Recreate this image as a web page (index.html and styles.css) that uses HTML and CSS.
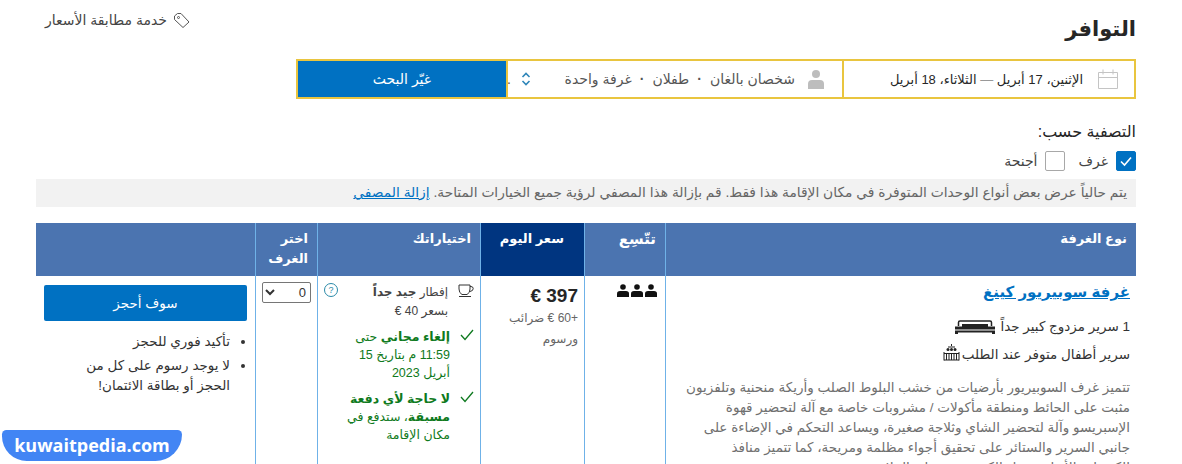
FILE: index.html
```html
<!DOCTYPE html>
<html lang="ar" dir="rtl">
<head>
<meta charset="utf-8">
<title>التوافر</title>
<link rel="stylesheet" href="styles.css">
</head>
<body>
<main class="page">
  <header class="top">
    <h2 class="title">التوافر</h2>
    <a class="match">
      <svg class="tag" viewBox="0 0 17 17" width="17" height="17"><path d="M1.500 4 4.500 1.500h3.500l8 8.500-6 5.500-8.500-8z" fill="none" stroke="#555"/><circle cx="5.500" cy="5.500" r="1" fill="none" stroke="#555"/></svg>
      <span>خدمة مطابقة الأسعار</span>
    </a>
  </header>

  <section class="search">
    <div class="seg seg-date">
      <svg class="cal" viewBox="0 0 22 22" width="22" height="22"><path d="M1.500 4.500h19v16h-19zM1.500 9.500h19M6 1.500v5M16 1.500v5" fill="none" stroke="#c4c4c4"/></svg>
      <span>الإثنين، 17 أبريل <i class="dash">—</i> الثلاثاء، 18 أبريل</span>
    </div>
    <div class="seg seg-guests">
      <svg class="person" viewBox="0 0 18 20" width="18" height="20"><circle cx="9" cy="5" r="4" fill="#bdbdbd"/><path d="M1 20v-5q0-4 4-4h8q4 0 4 4v5z" fill="#bdbdbd"/></svg>
      <span class="guests">شخصان بالغان</span><i class="dot">·</i><span class="guests">طفلان</span><i class="dot">·</i><span class="guests">غرفة واحدة</span>
      <svg class="updown" viewBox="0 0 10 14" width="10" height="14"><path d="M1.500 5 5 1.500 8.500 5M1.500 9 5 12.500 8.500 9" fill="none" stroke="#2f86b9" stroke-width="1.600"/></svg>
      <span class="stop">.</span>
    </div>
    <button class="change">غيّر البحث</button>
  </section>

  <section class="filter">
    <div class="filter-title">التصفية حسب:</div>
    <div class="checks">
      <label class="check"><span class="box on"><svg viewBox="0 0 20 20" width="20" height="20"><path d="m5 10.500 3.500 3.500L15 6.500" fill="none" stroke="#fff" stroke-width="1.600"/></svg></span>غرف</label>
      <label class="check"><span class="box"></span>أجنحة</label>
    </div>
    <p class="notice">يتم حالياً عرض بعض أنواع الوحدات المتوفرة في مكان الإقامة هذا فقط. قم بإزالة هذا المصفي لرؤية جميع الخيارات المتاحة. <a href="#">إزالة المصفي</a></p>
  </section>

  <section class="rooms">
    <div class="head c-type">نوع الغرفة</div>
    <div class="head c-sleeps">تتّسِع</div>
    <div class="head c-price today">سعر اليوم</div>
    <div class="head c-choice">اختياراتك</div>
    <div class="head c-select">اختر الغرف</div>
    <div class="head c-book"></div>

    <div class="cell c-type">
      <a class="room-name" href="#">غرفة سوبيريور كينغ</a>
      <div class="bed">1 سرير مزدوج كبير جداً
        <svg viewBox="0 0 42 14" width="42" height="14"><path d="M4.500 6V2.500q0-1.500 1.500-1.500h30q1.500 0 1.500 1.500V6" fill="none" stroke="#222" stroke-width="1.500"/><path d="M8 4h26v3H8z" fill="#222"/><path d="M1 6.500h40v3H1zM1 10.500h40V14h-3v-1.500H4V14H1z" fill="#222"/></svg>
      </div>
      <div class="bed crib">سرير أطفال متوفر عند الطلب
        <svg viewBox="0 0 17 17" width="17" height="17"><path d="M1 9.500h15M1 16h15M1 8v8.500M16 8v8.500M3.500 9.500V16M6 9.500V16M8.500 9.500V16M11 9.500V16M13.500 9.500V16" fill="none" stroke="#222"/><path d="M8.500 0v2M5 3h7" stroke="#222"/><circle cx="5" cy="5.500" r="1.500" fill="#222"/><circle cx="8.500" cy="5.500" r="1.500" fill="#222"/><circle cx="12" cy="5.500" r="1.500" fill="#222"/></svg>
      </div>
      <p class="desc">تتميز غرف السوبيريور بأرضيات من خشب البلوط الصلب وأريكة منحنية وتلفزيون مثبت على الحائط ومنطقة مأكولات / مشروبات خاصة مع آلة لتحضير قهوة الإسبريسو وآلة لتحضير الشاي وثلاجة صغيرة، ويساعد التحكم في الإضاءة على جانبي السرير والستائر على تحقيق أجواء مظلمة ومريحة، كما تتميز منافذ<br>الكهرباء والأبواب بقفل إلكتروني وخزانة الملابس بتصميم عصري</p>
    </div>
    <div class="cell c-sleeps">
      <div class="people">
        <svg viewBox="0 0 12 13" width="12" height="13"><circle cx="6" cy="3" r="2.800"/><path d="M0 13V9.500Q0 7 3 7h6q3 0 3 2.500V13z"/></svg>
        <svg viewBox="0 0 12 13" width="12" height="13"><circle cx="6" cy="3" r="2.800"/><path d="M0 13V9.500Q0 7 3 7h6q3 0 3 2.500V13z"/></svg>
        <svg viewBox="0 0 12 13" width="12" height="13"><circle cx="6" cy="3" r="2.800"/><path d="M0 13V9.500Q0 7 3 7h6q3 0 3 2.500V13z"/></svg>
      </div>
    </div>
    <div class="cell c-price">
      <div class="amount">€ 397</div>
      <div class="tax">+60 € ضرائب<br>ورسوم</div>
    </div>
    <div class="cell c-choice">
      <div class="opt meal">
        <svg class="cup" viewBox="0 0 16 13" width="16" height="13"><path d="M1 1h11v4q0 4-3 5.500H4Q1 9 1 5zM12 2.500h1q2.200 0 2.200 2.200T12 7.500M1 12.500h12" fill="none" stroke="#333"/></svg>
        <div class="opt-text"><div>إفطار <b>جيد جداً</b></div><div>بسعر 40 €</div></div>
        <span class="help">?</span>
      </div>
      <div class="opt good">
        <svg class="tick" viewBox="0 0 14 12" width="14" height="12"><path d="m1 6 4 4.500L13 1" fill="none" stroke="#0f7a20" stroke-width="1.300"/></svg>
        <div class="opt-text"><b>إلغاء مجاني</b> حتى<br>11:59 م بتاريخ 15<br>أبريل 2023</div>
      </div>
      <div class="opt good">
        <svg class="tick" viewBox="0 0 14 12" width="14" height="12"><path d="m1 6 4 4.500L13 1" fill="none" stroke="#0f7a20" stroke-width="1.300"/></svg>
        <div class="opt-text"><b>لا حاجة لأي دفعة<br>مسبقة</b>، ستدفع في<br>مكان الإقامة</div>
      </div>
    </div>
    <div class="cell c-select">
      <select class="qty"><option>0</option></select>
    </div>
    <div class="cell c-book">
      <button class="reserve">سوف أحجز</button>
      <ul class="perks">
        <li>تأكيد فوري للحجز</li>
        <li>لا يوجد رسوم على كل من الحجز أو بطاقة الائتمان!</li>
      </ul>
    </div>
  </section>
</main>
<div class="brand" dir="ltr">kuwaitpedia.com</div>
</body>
</html>
```

FILE: styles.css
```css
html, body {
  margin: 0;
  height: 464px;
  overflow: hidden;
  background: #fff;
}
body {
  font-family: "Liberation Sans", "DejaVu Sans", sans-serif;
  color: #262626;
  font-size: 14px;
  position: relative;
}
.page {
  width: 1100px;
  margin-inline-start: 46px;
  margin-inline-end: 36px;
}
.top {
  display: flex;
  justify-content: space-between;
  align-items: flex-start;
  height: 59px;
}
.title {
  margin: 12px 0 0;
  font-size: 21px;
  line-height: 34px;
  font-weight: 700;
  color: #262626;
}
.match {
  display: flex;
  align-items: center;
  gap: 6px;
  margin: 11px 0 0 9px;
  font-size: 14px;
  line-height: 18px;
  color: #444;
}
.search {
  display: flex;
  width: 840px;
  height: 40px;
}
.seg {
  display: flex;
  align-items: center;
  box-sizing: border-box;
  border: 2px solid #e9c53f;
  background: #fff;
}
.seg-date {
  width: 294px;
  gap: 14px;
  padding-inline-start: 15px;
  font-size: 13px;
  color: #262626;
}
.dash { font-style: normal; color: #999; }
.seg-guests {
  width: 336px;
  border-inline-start: 0;
  padding-inline-start: 17px;
  font-size: 14px;
  color: #555;
}
.person { margin-inline-end: 12px; }
.dot { font-style: normal; margin: 0 8px; font-weight: 700; }
.updown { margin-inline-start: auto; margin-inline-end: 10px; }
.stop { margin-inline-end: -1px; }
.change {
  width: 210px;
  border: 2px solid #e9c53f;
  border-inline-start: 0;
  background: #0071c2;
  color: #fff;
  font: 14px "Liberation Sans", "DejaVu Sans", sans-serif;
  padding: 0;
}
.filter { margin-top: 23px; }
.filter-title {
  font-size: 16px;
  line-height: 20px;
  color: #262626;
}
.checks {
  display: flex;
  gap: 13px;
  margin-top: 9px;
  height: 28px;
}
.check {
  display: flex;
  align-items: flex-start;
  gap: 8px;
  font-size: 14px;
  line-height: 20px;
  color: #444;
}
.box {
  display: block;
  width: 18px;
  height: 18px;
  border: 1px solid #a8a8a8;
  border-radius: 2px;
}
.box.on {
  background: #0071c2;
  border-color: #0071c2;
}
.box svg { display: block; margin: -1px; }
.notice {
  margin: 0;
  height: 28px;
  line-height: 28px;
  background: #f2f2f2;
  padding-inline-start: 9px;
  font-size: 13.800px;
  color: #666;
  white-space: nowrap;
  overflow: hidden;
}
.notice a { color: #0071c2; text-decoration: underline; }
.rooms {
  display: grid;
  grid-template-columns: 471px 81px 104px 163px 62px 219px;
  grid-template-rows: 53px 188px;
  margin-top: 16px;
}
.head {
  background: #4b74b0;
  color: #fff;
  font-size: 13px;
  font-weight: 700;
  line-height: 20px;
  padding: 6px 9px 0;
  box-sizing: border-box;
  border-inline-end: 1px solid #6fb2e8;
}
.head.c-sleeps { font-size: 15px; }
.head:nth-child(6) { border-inline-end: 0; }
.head.today {
  background: #003580;
  padding-inline-start: 20px;
}
.cell {
  box-sizing: border-box;
  border-inline-end: 1px solid #6fb2e8;
  padding: 6px 6px 0;
  overflow: hidden;
}
.cell:last-child { border-inline-end: 0; }
.room-name {
  display: block;
  font-size: 15px;
  font-weight: 700;
  line-height: 20px;
  color: #0071c2;
  text-decoration: underline;
}
.bed {
  display: flex;
  align-items: center;
  gap: 4px;
  font-size: 13.500px;
  line-height: 28px;
  color: #333;
}
.bed:first-of-type { margin-top: 11px; }
.crib { gap: 2px; }
.crib svg { margin-top: -6px; }
.desc {
  margin: 9px 0 0;
  font-size: 13.500px;
  line-height: 20px;
  color: #707070;
}
.people {
  display: flex;
  gap: 2px;
  margin-top: 2px;
  margin-inline-start: 2px;
}
.people svg { fill: #111; }
.amount {
  font-size: 19px;
  line-height: 24px;
  font-weight: 700;
  color: #262626;
  direction: ltr;
  text-align: right;
  margin-top: 2px;
}
.tax {
  font-size: 12px;
  line-height: 21px;
  color: #666;
}
.opt {
  display: flex;
  gap: 10px;
  font-size: 12.500px;
  line-height: 18px;
}
.opt-text { flex: 1; white-space: nowrap; }
.meal {
  color: #444;
  font-size: 12px;
  line-height: 19px;
  margin-top: 1px;
}
.good {
  color: #0f7a20;
  margin-top: 8px;
}
.meal + .good { margin-top: 7px; }
.cup { flex: none; margin-top: 1px; }
.tick { flex: none; margin-top: 1px; }
.help {
  flex: none;
  display: block;
  width: 12px;
  height: 12px;
  border: 1px solid #2a8aa8;
  border-radius: 50%;
  font-size: 9px;
  line-height: 12px;
  text-align: center;
  color: #2a8aa8;
}
.qty {
  display: block;
  width: 49px;
  height: 21px;
  font: 13px "Liberation Sans", sans-serif;
  border: 1px solid #767676;
  border-radius: 2px;
  background: #fff;
  color: #333;
}
.reserve {
  display: block;
  width: 203px;
  height: 36px;
  margin-inline-start: 2px;
  margin-top: 3px;
  background: #0071c2;
  color: #fff;
  border: 0;
  border-radius: 2px;
  font: 13.500px "Liberation Sans", "DejaVu Sans", sans-serif;
}
.perks {
  margin: 11px 0 0;
  padding-inline-start: 19px;
  padding-inline-end: 8px;
  font-size: 13.500px;
  line-height: 20px;
  color: #333;
}
.perks li { margin-bottom: 4px; }
.brand {
  position: absolute;
  left: 2px;
  top: 430px;
  width: 180px;
  height: 31px;
  box-sizing: border-box;
  background: #4285f4;
  border-radius: 5px 5px 30px 28px;
  color: #fff;
  font: 700 18px/30px "Open Sans", sans-serif;
  text-align: center;
}
```
